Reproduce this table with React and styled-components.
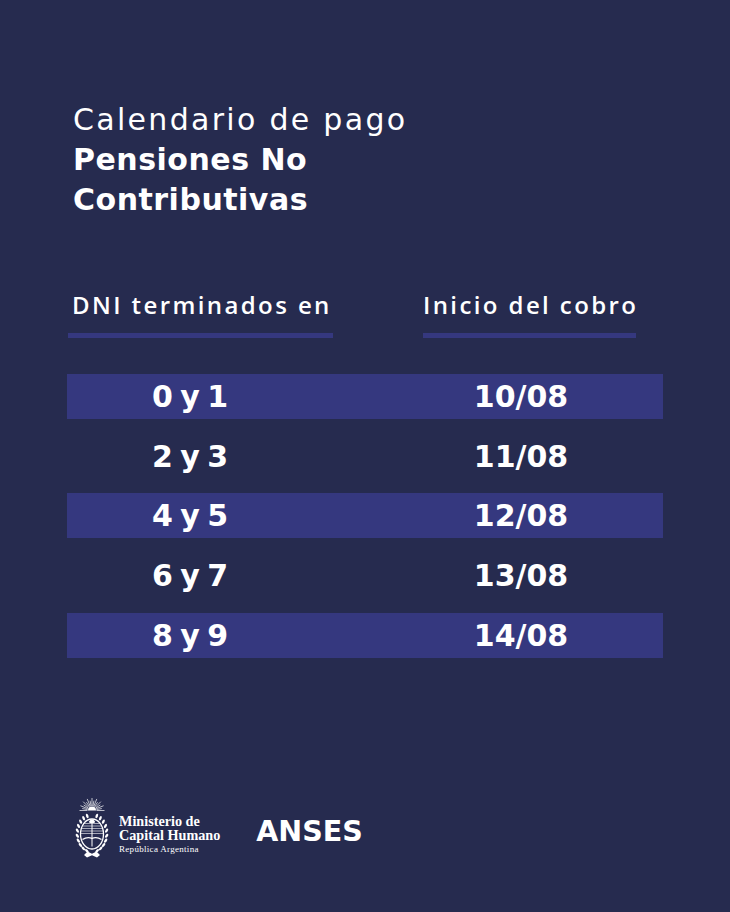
import React from 'react';
import styled, { createGlobalStyle } from 'styled-components';

const GlobalStyle = createGlobalStyle`
  html, body {
    margin: 0;
    padding: 0;
    background: #262b4f;
  }
  body {
    font-family: "DejaVu Sans", "Open Sans", sans-serif;
    color: #ffffff;
  }
`;

const Page = styled.div`
  width: 730px;
  height: 912px;
  background: #262b4f;
  display: flex;
  flex-direction: column;
  padding-top: 100px;
  box-sizing: border-box;
  overflow: hidden;
`;

const Title = styled.h1`
  margin: 0 0 0 73px;
  font-family: "DejaVu Sans", sans-serif;
  font-size: 30px;
  line-height: 40px;
  font-weight: 400;
  letter-spacing: 2.3px;
`;

const TitleStrong = styled.span`
  display: block;
  font-weight: 700;
  letter-spacing: 0.5px;
`;

const HeaderRow = styled.div`
  display: flex;
  gap: 90px;
  margin: 70px 0 0 68px;
`;

const HeaderCell = styled.div`
  width: ${props => props.width}px;
  display: flex;
  flex-direction: column;
  gap: 13px;
`;

const HeaderLabel = styled.span`
  font-family: "Open Sans", sans-serif;
  font-size: 24px;
  line-height: 30px;
  font-weight: 600;
  letter-spacing: 2.4px;
  padding-left: ${props => props.indent || 0}px;
  white-space: nowrap;
`;

const Bar = styled.div`
  height: 5px;
  background: #35387f;
`;

const Table = styled.div`
  display: flex;
  flex-direction: column;
  gap: 14.7px;
  margin: 36px 0 0 67px;
  width: 596px;
`;

const Row = styled.div`
  display: grid;
  grid-template-columns: 246px 1fr;
  column-gap: 66px;
  height: 45px;
  align-items: center;
  background: ${props => props.striped ? '#35387f' : 'transparent'};
`;

const Cell = styled.span`
  text-align: center;
  font-size: 30px;
  font-weight: 700;
  word-spacing: -3px;
  line-height: 45px;
`;

const Footer = styled.div`
  display: flex;
  align-items: center;
  gap: 36px;
  margin: 138px 0 0 74px;
`;

const Ministry = styled.div`
  display: flex;
  align-items: center;
  gap: 9px;
`;

const MinistryText = styled.div`
  display: flex;
  flex-direction: column;
  font-family: "Liberation Serif", "DejaVu Serif", serif;
  font-weight: 700;
  font-size: 14.2px;
  line-height: 14.5px;
  padding-top: 12px;
`;

const MinistrySub = styled.span`
  font-size: 9px;
  line-height: 12px;
  font-weight: 400;
  letter-spacing: 0.3px;
`;

const Anses = styled.span`
  font-size: 28.5px;
  font-weight: 700;
  line-height: 36px;
  padding-top: 8px;
`;

const rows = [
  ['0 y 1', '10/08'],
  ['2 y 3', '11/08'],
  ['4 y 5', '12/08'],
  ['6 y 7', '13/08'],
  ['8 y 9', '14/08']
];

function Emblem() {
  const rays = [];
  for (let i = 0; i <= 16; i++) {
    const a = Math.PI + (Math.PI * i) / 16;
    const r2 = i % 2 ? 10 : 12.5;
    rays.push(
      <line
        key={i}
        x1={18 + Math.cos(a) * 4.5}
        y1={14 + Math.sin(a) * 4.5}
        x2={18 + Math.cos(a) * r2}
        y2={14 + Math.sin(a) * r2}
      />
    );
  }
  const leaves = [];
  for (let i = 0; i < 10; i++) {
    const t = -Math.PI / 2 + (Math.PI * (i + 1.2)) / 11.5;
    const y = 37 + Math.sin(t) * 18.5;
    const dx = Math.cos(t) * 14.8;
    leaves.push(<ellipse key={'l' + i} cx={18 - dx} cy={y} rx="1.2" ry="2.3" transform={`rotate(${-20 - i * 3} ${18 - dx} ${y})`} />);
    leaves.push(<ellipse key={'r' + i} cx={18 + dx} cy={y} rx="1.2" ry="2.3" transform={`rotate(${20 + i * 3} ${18 + dx} ${y})`} />);
  }
  return (
    <svg width="36" height="65" viewBox="0 0 36 64" fill="none" stroke="#fff" strokeWidth="0.9">
      <g strokeWidth="0.7">{rays}</g>
      <path d="M14 14 a4 4 0 0 1 8 0 Z" fill="#fff" stroke="none" />
      <g fill="#fff" stroke="none">{leaves}</g>
      <ellipse cx="18" cy="37.5" rx="11.5" ry="15" strokeWidth="1.3" />
      <g strokeWidth="0.6">
        <line x1="9.5" y1="27" x2="26.5" y2="27" />
        <line x1="8.3" y1="29.5" x2="27.7" y2="29.5" />
        <line x1="7.5" y1="32" x2="28.5" y2="32" />
        <line x1="7" y1="34.5" x2="29" y2="34.5" />
        <line x1="6.8" y1="37" x2="29.2" y2="37" />
      </g>
      <line x1="18" y1="25" x2="18" y2="50" strokeWidth="1" />
      <path d="M15 25 q3 -4.5 6 0 l-0.5 1.5 h-5 z" fill="#fff" stroke="none" />
      <path d="M8.5 43 q4.5 -3 9.5 -1.2 q5 -1.8 9.5 1.2" strokeWidth="1.4" />
      <path d="M10 58.5 l3.5 -3.5 l4.5 2.2 l4.5 -2.2 l3.5 3.5 l-3 2.5 l-5 -2.3 l-5 2.3 z" fill="#fff" stroke="none" />
    </svg>
  );
}

export default function App() {
  return (
    <Page>
      <GlobalStyle />
      <Title>
        Calendario de pago
        <TitleStrong>Pensiones No</TitleStrong>
        <TitleStrong>Contributivas</TitleStrong>
      </Title>
      <HeaderRow>
        <HeaderCell width={265}>
          <HeaderLabel indent={4}>DNI terminados en</HeaderLabel>
          <Bar />
        </HeaderCell>
        <HeaderCell width={213}>
          <HeaderLabel>Inicio del cobro</HeaderLabel>
          <Bar />
        </HeaderCell>
      </HeaderRow>
      <Table>
        {rows.map(([dni, date], i) => (
          <Row key={dni} striped={i % 2 === 0}>
            <Cell>{dni}</Cell>
            <Cell>{date}</Cell>
          </Row>
        ))}
      </Table>
      <Footer>
        <Ministry>
          <Emblem />
          <MinistryText>
            <span>Ministerio de</span>
            <span>Capital Humano</span>
            <MinistrySub>República Argentina</MinistrySub>
          </MinistryText>
        </Ministry>
        <Anses>ANSES</Anses>
      </Footer>
    </Page>
  );
}
